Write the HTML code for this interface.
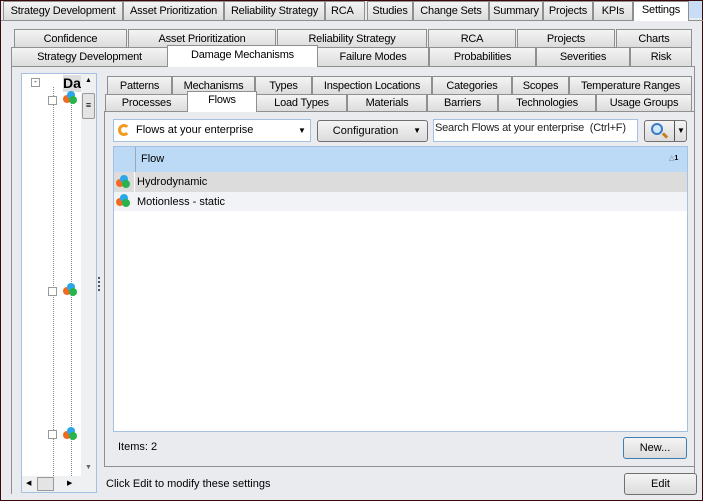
<!DOCTYPE html><html><head><style>
*{box-sizing:border-box}
body{margin:0;width:703px;height:501px;position:relative;overflow:hidden;background:#e9ebef;font-family:"Liberation Sans",sans-serif;font-size:11px;color:#000;border:1px solid #3a0a0a}
.a{position:absolute}
.t{position:absolute;border:1px solid #8e8f91;background:linear-gradient(#f4f4f4,#dcdcdc);text-align:center;white-space:nowrap;overflow:hidden;letter-spacing:-0.2px}
.w{background:#fff;border-bottom:none}
.btn{position:absolute;border:1px solid #707070;border-radius:3px;background:linear-gradient(#f4f4f4,#dcdcdc);text-align:center}
.ic{position:absolute;width:14px;height:13px}
.ic i{position:absolute;width:8px;height:8px;border-radius:50%}
</style></head><body>
<div class="t" style="left:2px;top:0;width:120px;height:20px;line-height:19px">Strategy Development</div>
<div class="t" style="left:122px;top:0;width:101px;height:20px;line-height:19px">Asset Prioritization</div>
<div class="t" style="left:223px;top:0;width:101px;height:20px;line-height:19px">Reliability Strategy</div>
<div class="t" style="left:324px;top:0;width:40px;height:20px;line-height:19px;text-align:left;padding-left:5px">RCA</div>
<div class="t" style="left:366px;top:0;width:46px;height:20px;line-height:19px">Studies</div>
<div class="t" style="left:412px;top:0;width:76px;height:20px;line-height:19px">Change Sets</div>
<div class="t" style="left:488px;top:0;width:54px;height:20px;line-height:19px">Summary</div>
<div class="t" style="left:542px;top:0;width:50px;height:20px;line-height:19px">Projects</div>
<div class="t" style="left:592px;top:0;width:40px;height:20px;line-height:19px">KPIs</div>
<div class="t w" style="left:632px;top:0;width:56px;height:20px;line-height:16px">Settings</div>
<div class="a" style="left:688px;top:0;width:13px;height:17px;background:#c9dcf5"></div>
<div class="a" style="left:0;top:19px;width:632px;height:1px;background:#8e8f91"></div>
<div class="a" style="left:688px;top:19px;width:14px;height:1px;background:#8e8f91"></div>
<div class="t" style="left:13px;top:28px;width:113px;height:19px;line-height:18px">Confidence</div>
<div class="t" style="left:127px;top:28px;width:148px;height:19px;line-height:18px">Asset Prioritization</div>
<div class="t" style="left:276px;top:28px;width:150px;height:19px;line-height:18px">Reliability Strategy</div>
<div class="t" style="left:427px;top:28px;width:88px;height:19px;line-height:18px">RCA</div>
<div class="t" style="left:516px;top:28px;width:98px;height:19px;line-height:18px">Projects</div>
<div class="t" style="left:615px;top:28px;width:76px;height:19px;line-height:18px">Charts</div>
<div class="t" style="left:10px;top:46px;width:157px;height:20px;line-height:19px">Strategy Development</div>
<div class="t" style="left:316px;top:46px;width:112px;height:20px;line-height:19px">Failure Modes</div>
<div class="t" style="left:428px;top:46px;width:107px;height:20px;line-height:19px">Probabilities</div>
<div class="t" style="left:535px;top:46px;width:94px;height:20px;line-height:19px">Severities</div>
<div class="t" style="left:629px;top:46px;width:62px;height:20px;line-height:19px">Risk</div>
<div class="a" style="left:10px;top:65px;width:684px;height:428px;border:1px solid #8e8f91;border-bottom:none"></div>
<div class="t w" style="left:166px;top:44px;width:151px;height:22px;line-height:18px">Damage Mechanisms</div>
<div class="a" style="left:20px;top:72px;width:76px;height:420px;background:#fff;border:1px solid #a6c0e0"></div>
<div class="a" style="left:80px;top:73px;width:15px;height:402px;background:#eef0f2"></div>
<div class="a" style="left:81px;top:92px;width:13px;height:26px;border:1px solid #999;border-radius:2px;background:#e4e4e4;text-align:center;line-height:22px;font-size:9px">≡</div>
<div class="a" style="left:84px;top:76px;font-size:7px">▲</div>
<div class="a" style="left:84px;top:463px;font-size:7px;color:#666">▼</div>
<div class="a" style="left:21px;top:475px;width:74px;height:16px;background:#eef0f2"></div>
<div class="a" style="left:36px;top:476px;width:17px;height:14px;border:1px solid #999;background:#e4e4e4"></div>
<div class="a" style="left:25px;top:478px;font-size:7px">◀</div><div class="a" style="left:66px;top:478px;font-size:7px">▶</div>
<div class="a" style="left:30px;top:77px;width:9px;height:9px;border:1px solid #999;font-size:8px;line-height:6px;text-align:center">-</div>
<div class="a" style="left:62px;top:74px;width:18px;height:17px;background:#ddd;font-weight:bold;font-size:14px;line-height:17px;overflow:hidden">Da</div>
<div class="a" style="left:52px;top:86px;width:0;height:389px;border-left:1px dotted #888"></div>
<div class="a" style="left:70px;top:100px;width:0;height:375px;border-left:1px dotted #888"></div>
<div class="a" style="left:47px;top:95px;width:9px;height:9px;border:1px solid #999;background:#fff"></div>
<div class="a" style="left:47px;top:286px;width:9px;height:9px;border:1px solid #999;background:#fff"></div>
<div class="a" style="left:47px;top:429px;width:9px;height:9px;border:1px solid #999;background:#fff"></div>
<div class="ic" style="left:62px;top:90px"><i style="background:#f26a21;left:0;top:4px"></i><i style="background:#2aa7e8;left:4px;top:0"></i><i style="background:#29b34a;left:6px;top:5px"></i></div>
<div class="ic" style="left:62px;top:282px"><i style="background:#f26a21;left:0;top:4px"></i><i style="background:#2aa7e8;left:4px;top:0"></i><i style="background:#29b34a;left:6px;top:5px"></i></div>
<div class="ic" style="left:62px;top:426px"><i style="background:#f26a21;left:0;top:4px"></i><i style="background:#2aa7e8;left:4px;top:0"></i><i style="background:#29b34a;left:6px;top:5px"></i></div>
<div class="a" style="left:97px;top:276px;width:2px;height:14px;border-left:2px dotted #555"></div>
<div class="t" style="left:106px;top:75px;width:65px;height:19px;line-height:18px">Patterns</div>
<div class="t" style="left:171px;top:75px;width:83px;height:19px;line-height:18px">Mechanisms</div>
<div class="t" style="left:254px;top:75px;width:57px;height:19px;line-height:18px">Types</div>
<div class="t" style="left:311px;top:75px;width:120px;height:19px;line-height:18px">Inspection Locations</div>
<div class="t" style="left:431px;top:75px;width:80px;height:19px;line-height:18px">Categories</div>
<div class="t" style="left:511px;top:75px;width:57px;height:19px;line-height:18px">Scopes</div>
<div class="t" style="left:568px;top:75px;width:123px;height:19px;line-height:18px">Temperature Ranges</div>
<div class="t" style="left:104px;top:93px;width:83px;height:18px;line-height:17px">Processes</div>
<div class="t" style="left:255px;top:93px;width:91px;height:18px;line-height:17px">Load Types</div>
<div class="t" style="left:346px;top:93px;width:80px;height:18px;line-height:17px">Materials</div>
<div class="t" style="left:426px;top:93px;width:71px;height:18px;line-height:17px">Barriers</div>
<div class="t" style="left:497px;top:93px;width:98px;height:18px;line-height:17px">Technologies</div>
<div class="t" style="left:595px;top:93px;width:96px;height:18px;line-height:17px">Usage Groups</div>
<div class="a" style="left:103px;top:110px;width:591px;height:356px;border:1px solid #8e8f91;background:#e9ebef"></div>
<div class="t w" style="left:186px;top:90px;width:70px;height:21px;line-height:17px">Flows</div>
<div class="a" style="left:112px;top:118px;width:198px;height:23px;background:#fff;border:1px solid #a6c0e0;line-height:20px;padding-left:22px">Flows at your enterprise</div>
<div class="a" style="left:117px;top:123px;width:12px;height:12px;border:3px solid #f39a1e;border-radius:50%;border-right-color:transparent"></div>
<div class="a" style="left:297px;top:125px;font-size:8px">▼</div>
<div class="btn" style="left:316px;top:119px;width:111px;height:22px;line-height:20px;padding-right:14px">Configuration<span style="position:absolute;right:6px;font-size:8px">▼</span></div>
<div class="a" style="left:432px;top:118px;width:205px;height:23px;background:#fff;border:1px solid #a6c0e0;line-height:16px;padding-left:1px;color:#222;letter-spacing:-0.2px">Search Flows at your enterprise&nbsp; (Ctrl+F)</div>
<div class="btn" style="left:643px;top:119px;width:43px;height:22px"><span style="position:absolute;left:6px;top:2px;width:12px;height:12px;border:2px solid #3a7bc8;border-radius:50%;background:#cfe6fb"></span><span style="position:absolute;left:17px;top:13px;width:6px;height:3px;background:#c08020;transform:rotate(45deg)"></span><span style="position:absolute;left:29px;top:0;height:20px;border-left:1px solid #555"></span><span style="position:absolute;left:32px;top:5px;font-size:8px">▼</span></div>
<div class="a" style="left:112px;top:145px;width:575px;height:286px;background:#fff;border:1px solid #a6c0e0"></div>
<div class="a" style="left:113px;top:146px;width:573px;height:25px;background:#bcdaf6"></div>
<div class="a" style="left:134px;top:146px;width:1px;height:25px;background:#9ab"></div>
<div class="a" style="left:140px;top:152px;font-size:11px">Flow</div>
<div class="a" style="left:668px;top:153px;font-size:7px;color:#777">△<b style="color:#000;font-size:7px">1</b></div>
<div class="a" style="left:113px;top:171px;width:573px;height:20px;background:#dcdcdc"></div>
<div class="a" style="left:133px;top:171px;width:1px;height:20px;background:#fff"></div>
<div class="a" style="left:113px;top:191px;width:573px;height:19px;background:#f1f3f6"></div>
<div class="a" style="left:136px;top:175px;font-size:11px">Hydrodynamic</div>
<div class="a" style="left:136px;top:195px;font-size:11px">Motionless - static</div>
<div class="ic" style="left:115px;top:174px"><i style="background:#f26a21;left:0;top:4px"></i><i style="background:#2aa7e8;left:4px;top:0"></i><i style="background:#29b34a;left:6px;top:5px"></i></div>
<div class="ic" style="left:115px;top:193px"><i style="background:#f26a21;left:0;top:4px"></i><i style="background:#2aa7e8;left:4px;top:0"></i><i style="background:#29b34a;left:6px;top:5px"></i></div>
<div class="a" style="left:117px;top:440px">Items: 2</div>
<div class="btn" style="left:622px;top:436px;width:64px;height:22px;line-height:20px;border-color:#3c7fb1">New...</div>
<div class="a" style="left:105px;top:477px;font-size:11px">Click Edit to modify these settings</div>
<div class="btn" style="left:623px;top:472px;width:73px;height:22px;line-height:20px">Edit</div>
</body></html>
